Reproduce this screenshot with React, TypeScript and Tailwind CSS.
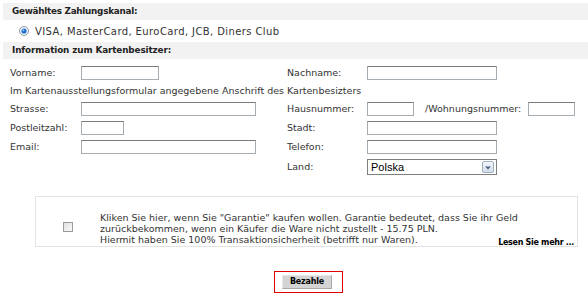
import React from "react";

const inp = "h-[14px] border border-[#a5acb2] border-t-[#7a7a7a] bg-white";

function Radio() {
  return (
    <svg width="10" height="10" viewBox="0 0 10 10">
      <circle cx="5" cy="5" r="4.5" fill="#f4f4f4" stroke="#8a9aa8" />
      <circle cx="5" cy="5" r="2.6" fill="#1f6fd0" />
      <circle cx="4.3" cy="4.2" r="1" fill="#8cc4ff" />
    </svg>
  );
}

export default function App() {
  return (
    <div className="w-[588px] h-[300px] bg-white font-['DejaVu_Sans',Verdana,sans-serif] text-[9.5px] text-[#333] overflow-hidden">
      <div className="pl-[3px] pt-[3px]">
        <div className="h-[17px] bg-[#f2f2f2] pl-[9px] flex items-center font-bold text-[#222] text-[8.8px] tracking-[-0.25px]">
          Gewähltes Zahlungskanal:
        </div>
        <div className="h-[22px] pl-[16px] flex items-center gap-[6px]">
          <Radio />
          <span className="text-[10px] tracking-[0.4px]">VISA, MasterCard, EuroCard, JCB, Diners Club</span>
        </div>
        <div className="h-[17px] bg-[#f2f2f2] pl-[9px] flex items-center font-bold text-[#222] text-[8.8px] tracking-[-0.1px]">
          Information zum Kartenbesitzer:
        </div>
      </div>

      <div className="pl-[10px] pt-[7px]">
        <div className="h-[14px] flex items-center">
          <span className="w-[71px]">Vorname:</span>
          <div className={`${inp} w-[78px]`} />
          <span className="ml-[128px] w-[80px]">Nachname:</span>
          <div className={`${inp} w-[130px]`} />
        </div>
        <div className="h-[22px] flex items-center whitespace-nowrap">
          Im Kartenausstellungsformular angegebene Anschrift des Kartenbesizters
        </div>
        <div className="h-[14px] flex items-center">
          <span className="w-[71px]">Strasse:</span>
          <div className={`${inp} w-[175px]`} />
          <span className="ml-[31px] w-[80px]">Hausnummer:</span>
          <div className={`${inp} w-[47px]`} />
          <span className="ml-[11px] w-[103px]">/Wohnungsnummer:</span>
          <div className={`${inp} w-[47px]`} />
        </div>
        <div className="h-[14px] mt-[5px] flex items-center">
          <span className="w-[71px]">Postleitzahl:</span>
          <div className={`${inp} w-[43px]`} />
          <span className="ml-[163px] w-[80px]">Stadt:</span>
          <div className={`${inp} w-[130px]`} />
        </div>
        <div className="h-[14px] mt-[5px] flex items-center">
          <span className="w-[71px]">Email:</span>
          <div className={`${inp} w-[175px]`} />
          <span className="ml-[31px] w-[80px]">Telefon:</span>
          <div className={`${inp} w-[130px]`} />
        </div>
        <div className="h-[16px] mt-[5px] flex items-center">
          <span className="ml-[277px] w-[80px]">Land:</span>
          <div className="w-[130px] h-[16px] border border-[#7f7f7f] bg-white flex items-center justify-between pl-[3px] pr-[2px]">
            <span className="font-['Liberation_Sans',Arial,sans-serif] text-[11px] text-black leading-none">Polska</span>
            <div className="w-[12px] h-[12px] border border-[#9fb0c4] rounded-[2px] bg-gradient-to-b from-[#f4f7fb] to-[#d3dde9] flex items-end justify-center pb-[2px]">
              <svg width="6" height="4" viewBox="0 0 6 4">
                <path d="M0 0.5 H6 L3 3.5 Z" fill="#4d6185" />
              </svg>
            </div>
          </div>
        </div>
      </div>

      <div className="ml-[35px] mt-[21px] w-[543px] h-[51px] border border-[#e3e3e3] flex">
        <div className="w-[64px] flex items-center justify-center pt-[11px]">
          <div className="w-[10px] h-[10px] border border-[#9a9a9a] bg-gradient-to-br from-[#e0e0e0] to-[#fafafa]" />
        </div>
        <div className="flex-1 pt-[15px] pr-[3px] leading-[11px] whitespace-nowrap">
          <div>Kliken Sie hier, wenn Sie "Garantie" kaufen wollen. Garantie bedeutet, dass Sie ihr Geld</div>
          <div>zurückbekommen, wenn ein Käufer die Ware nicht zustellt - 15.75 PLN.</div>
          <div className="flex justify-between">
            <span>Hiermit haben Sie 100% Transaktionsicherheit (betrifft nur Waren).</span>
            <span className="font-bold text-black mt-[3px] text-[8px] tracking-[-0.3px]">Lesen Sie mehr ...</span>
          </div>
        </div>
      </div>

      <div className="flex pl-[274px] mt-[24px]">
        <div className="w-[69px] h-[22px] border border-[#e00000] pl-[7px] pt-[3px]">
          <div className="w-[50px] h-[14px] bg-[#d4d4d4] border border-[#a9a9a9] border-t-[#e8e8e8] border-l-[#e8e8e8] flex items-center justify-center font-bold text-black text-[8px] tracking-[-0.2px]">
            Bezahle
          </div>
        </div>
      </div>
    </div>
  );
}
